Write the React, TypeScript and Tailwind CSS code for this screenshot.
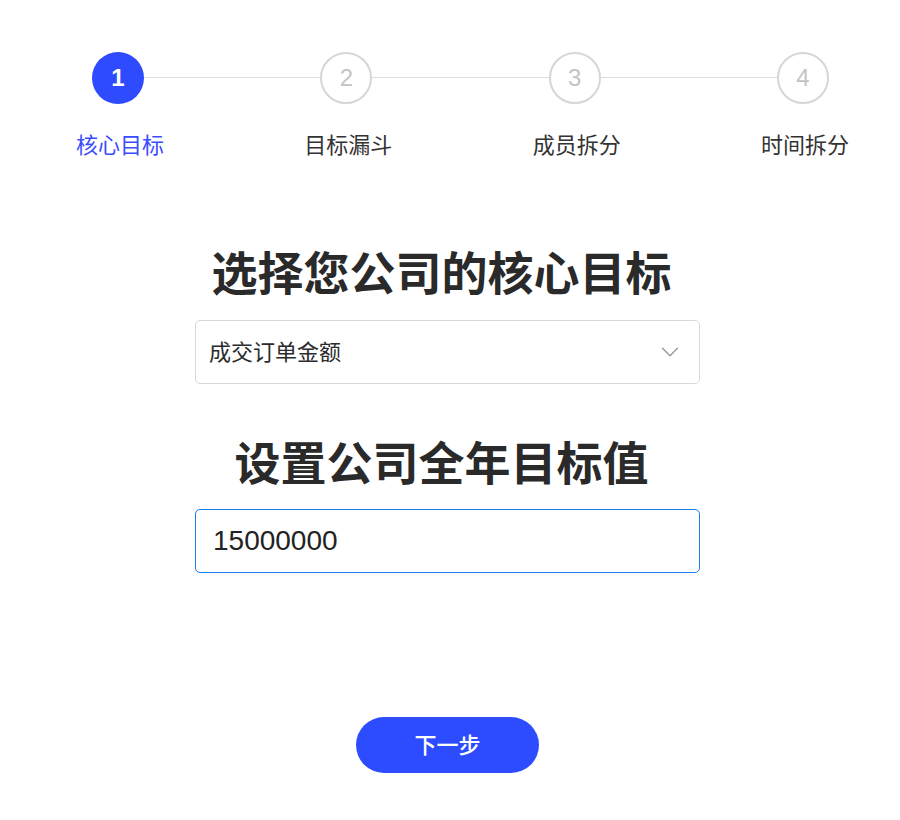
import React from 'react';
import { ChevronDown } from 'lucide-react';

const steps = ['核心目标', '目标漏斗', '成员拆分', '时间拆分'];

const font = { fontFamily: '"Liberation Sans", "Noto Sans CJK SC", sans-serif' };

const Stepper: React.FC<{ current: number }> = ({ current }) => (
  <div className="flex items-start pl-[92px] pr-[71px] pt-[52px]">
    {steps.map((label, i) => {
      const active = i === current;
      return (
        <React.Fragment key={label}>
          {i > 0 && <div className="mt-[25px] h-px flex-1 bg-[#dcdcdc]" />}
          <div className="flex w-[52px] flex-col items-center">
            <div
              className={`flex h-[52px] w-[52px] items-center justify-center rounded-full text-[24px] ${
                active
                  ? 'bg-[#2f4bff] font-bold text-white'
                  : 'border-2 border-[#d6d6d6] bg-white text-[#c4c4c4]'
              }`}
            >
              {i + 1}
            </div>
            <div
              className={`mt-[30px] ml-[4px] whitespace-nowrap text-[22px] leading-[24px] ${
                active ? 'text-[#3b4cff]' : 'text-[#333]'
              }`}
            >
              {label}
            </div>
          </div>
        </React.Fragment>
      );
    })}
  </div>
);

export default function App() {
  return (
    <div className="flex min-h-[820px] w-[900px] flex-col bg-white" style={font}>
      <Stepper current={0} />

      <div className="ml-[195px] mt-[88px] flex w-[505px] flex-col items-center">
        <h2 className="-ml-[12px] text-[46px] font-bold leading-[56px] text-[#2a2a2a]">选择您公司的核心目标</h2>
        <div className="mt-[18px] flex h-[64px] w-full items-center justify-between rounded-[5px] border border-[#d9d9d9] bg-white pl-[13px] pr-[14px]">
          <span className="text-[22px] text-[#2b2b2b]">成交订单金额</span>
          <ChevronDown size={30} strokeWidth={1.2} className="text-[#9a9a9a]" />
        </div>

        <h2 className="-ml-[12px] mt-[52px] text-[46px] font-bold leading-[56px] text-[#2a2a2a]">设置公司全年目标值</h2>
        <div className="mt-[17px] flex h-[64px] w-full items-center rounded-[5px] border-[1.5px] border-[#1a7df0] bg-white pl-[17px]">
          <span className="text-[28px] text-[#222]">15000000</span>
        </div>
      </div>

      <div className="mt-[144px] flex justify-center pr-[5px]">
        <button className="flex h-[56px] w-[183px] items-center justify-center rounded-full bg-[#2d4cff] text-[22px] font-medium text-white">
          下一步
        </button>
      </div>
    </div>
  );
}
